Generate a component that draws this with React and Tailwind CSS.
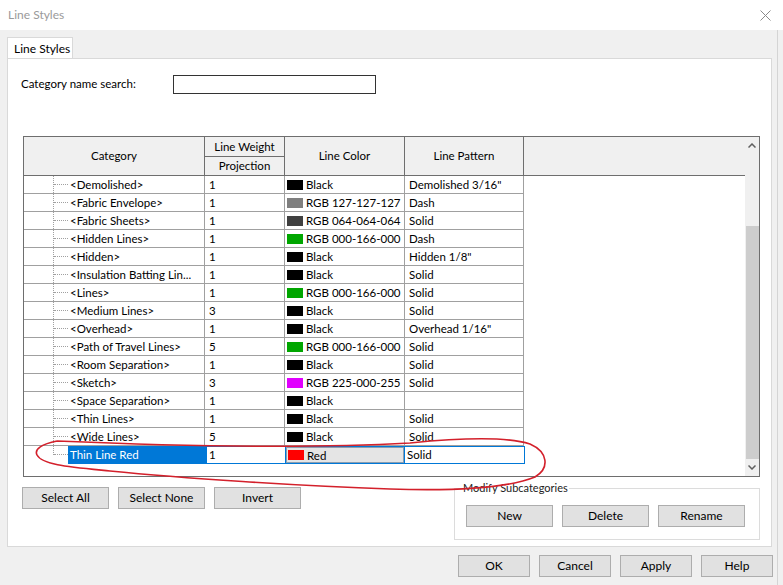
import React from "react";

const rows = [
  { name: "<Demolished>", w: "1", color: "#000000", label: "Black", pattern: 'Demolished 3/16"' },
  { name: "<Fabric Envelope>", w: "1", color: "#7f7f7f", label: "RGB 127-127-127", pattern: "Dash" },
  { name: "<Fabric Sheets>", w: "1", color: "#404040", label: "RGB 064-064-064", pattern: "Solid" },
  { name: "<Hidden Lines>", w: "1", color: "#00a600", label: "RGB 000-166-000", pattern: "Dash" },
  { name: "<Hidden>", w: "1", color: "#000000", label: "Black", pattern: 'Hidden 1/8"' },
  { name: "<Insulation Batting Lin...", w: "1", color: "#000000", label: "Black", pattern: "Solid" },
  { name: "<Lines>", w: "1", color: "#00a600", label: "RGB 000-166-000", pattern: "Solid" },
  { name: "<Medium Lines>", w: "3", color: "#000000", label: "Black", pattern: "Solid" },
  { name: "<Overhead>", w: "1", color: "#000000", label: "Black", pattern: 'Overhead 1/16"' },
  { name: "<Path of Travel Lines>", w: "5", color: "#00a600", label: "RGB 000-166-000", pattern: "Solid" },
  { name: "<Room Separation>", w: "1", color: "#000000", label: "Black", pattern: "Solid" },
  { name: "<Sketch>", w: "3", color: "#e100ff", label: "RGB 225-000-255", pattern: "Solid" },
  { name: "<Space Separation>", w: "1", color: "#000000", label: "Black", pattern: "" },
  { name: "<Thin Lines>", w: "1", color: "#000000", label: "Black", pattern: "Solid" },
  { name: "<Wide Lines>", w: "5", color: "#000000", label: "Black", pattern: "Solid" },
];

function Btn({ children, w = "w-[87px]" }) {
  return (
    <button className={`${w} h-[22px] bg-[#e1e1e1] border border-[#adadad] text-[12px] text-black leading-none`}>
      {children}
    </button>
  );
}

function TreeStub({ last }) {
  return (
    <div className="relative w-[44px] h-full shrink-0">
      <div className={`absolute left-[29px] top-0 ${last ? "h-[9px]" : "h-full"} border-l border-dotted border-[#a0a0a0]`} />
      <div className="absolute left-[30px] top-[8px] w-[14px] border-t border-dotted border-[#a0a0a0]" />
    </div>
  );
}

export default function App() {
  return (
    <div
      className="relative w-[783px] h-[585px] bg-[#f0f0f0] overflow-hidden text-[11.5px] text-black"
      style={{ fontFamily: 'Lato, "Noto Sans", "Liberation Sans", sans-serif' }}
    >
      {/* title bar */}
      <div className="h-[30px] bg-white flex items-center justify-between pl-[8px] pr-[10px]">
        <span className="text-[12px] text-[#9a9a9a]">Line Styles</span>
        <svg width="11" height="11" viewBox="0 0 11 11" className="mr-[2px]">
          <path d="M0.5 0.5 L10.5 10.5 M10.5 0.5 L0.5 10.5" stroke="#8a8a8a" strokeWidth="1" />
        </svg>
      </div>

      <div className="flex h-[555px]">
        <div className="w-[777px] pl-[7px] pr-[5px] pt-[7px] flex flex-col">
          {/* tab */}
          <div className="flex">
            <div className="w-[66px] h-[22px] bg-white border border-b-0 border-[#d9d9d9] flex items-center pl-[6px] whitespace-nowrap text-[12px]">
              Line Styles
            </div>
          </div>
          {/* panel */}
          <div className="h-[489px] bg-white border border-[#d9d9d9] -mt-px flex flex-col pl-[13px] pr-[12px]">
            <div className="flex items-center mt-[15px] h-[20px]">
              <span className="w-[152px] whitespace-nowrap">Category name search:</span>
              <div className="w-[203px] h-[19px] border border-[#333]" />
            </div>

            {/* table */}
            <div className="mt-[42px] ml-[2px] w-[737px] h-[341px] border border-[#6e6e6e] flex">
              <div className="flex-1 flex flex-col">
                {/* header */}
                <div className="flex h-[39px] bg-[#f0f0f0] border-b border-[#6e6e6e]">
                  <div className="w-[181px] border-r border-[#6e6e6e] flex items-center justify-center">Category</div>
                  <div className="w-[80px] border-r border-[#6e6e6e] flex flex-col">
                    <div className="h-[20px] border-b border-[#6e6e6e] flex items-center justify-center">Line Weight</div>
                    <div className="flex-1 flex items-center justify-center">Projection</div>
                  </div>
                  <div className="w-[120px] border-r border-[#6e6e6e] flex items-center justify-center">Line Color</div>
                  <div className="w-[119px] border-r border-[#6e6e6e] flex items-center justify-center">Line Pattern</div>
                  <div className="flex-1" />
                </div>
                {/* rows */}
                {rows.map((r) => (
                  <div key={r.name} className="flex h-[18px]">
                    <div className="w-[181px] flex border-r border-b border-[#a0a0a0]">
                      <TreeStub />
                      <span className="pl-[2px] leading-[18px] whitespace-nowrap overflow-hidden">{r.name}</span>
                    </div>
                    <div className="w-[80px] border-r border-b border-[#a0a0a0] pl-[4px] leading-[18px]">{r.w}</div>
                    <div className="w-[120px] border-r border-b border-[#a0a0a0] flex items-center pl-[2px] gap-[3px]">
                      <span className="w-[16px] h-[10px] shrink-0" style={{ background: r.color }} />
                      <span className="leading-[18px] whitespace-nowrap">{r.label}</span>
                    </div>
                    <div className="w-[119px] border-r border-b border-[#a0a0a0] pl-[4px] leading-[18px] whitespace-nowrap">{r.pattern}</div>
                    <div className="flex-1" />
                  </div>
                ))}
                {/* selected row */}
                <div className="flex h-[18px]">
                  <div className="w-[181px] flex">
                    <TreeStub last />
                    <div className="flex-1 bg-[#0078d7] text-white pl-[2px] leading-[18px]">Thin Line Red</div>
                  </div>
                  <div className="w-[320px] bg-[#0078d7] flex p-px pl-[2px] gap-px">
                    <div className="w-[78px] bg-white pl-[2px] leading-[16px]">1</div>
                    <div className="w-[118px] bg-[#e5e5e5] border border-[#8a9db0] flex items-center pl-px gap-[3px]">
                      <span className="w-[16px] h-[10px] bg-[#ff0000] shrink-0" />
                      <span className="leading-[14px] mt-[2px]">Red</span>
                    </div>
                    <div className="flex-1 bg-white pl-[2px] leading-[16px]">Solid</div>
                  </div>
                  <div className="flex-1" />
                </div>
              </div>
              {/* scrollbar */}
              <div className="w-[14px] bg-[#f0f0f0] flex flex-col items-center">
                <div className="h-[17px] flex items-center justify-center">
                  <svg width="8" height="5" viewBox="0 0 8 5"><path d="M0.5 4.5 L4 1 L7.5 4.5" fill="none" stroke="#606060" strokeWidth="1.5" /></svg>
                </div>
                <div className="mt-[72px] w-[13px] h-[234px] bg-[#cdcdcd]" />
                <div className="flex-1" />
                <div className="h-[17px] flex items-center justify-center">
                  <svg width="8" height="5" viewBox="0 0 8 5"><path d="M0.5 0.5 L4 4 L7.5 0.5" fill="none" stroke="#606060" strokeWidth="1.5" /></svg>
                </div>
              </div>
            </div>

            {/* lower controls */}
            <div className="flex mt-[10px] ml-[1px]">
              <div className="flex gap-[9px] h-[22px]">
                <Btn>Select All</Btn>
                <Btn>Select None</Btn>
                <Btn>Invert</Btn>
              </div>
              <div className="ml-auto mr-[-1px] w-[306px] h-[52px] mt-[1px] relative border border-[#dcdcdc] flex gap-[9px] pl-[11px] pt-[16px]">
                <span className="absolute -top-[9px] left-[7px] bg-white px-px text-[11px] text-[#222] leading-[16px] whitespace-nowrap">Modify Subcategories</span>
                <Btn>New</Btn>
                <Btn>Delete</Btn>
                <Btn>Rename</Btn>
              </div>
            </div>
          </div>

          {/* dialog buttons */}
          <div className="flex justify-end gap-[9px] mt-[8px] mr-[-1px]">
            <Btn w="w-[72px]">OK</Btn>
            <Btn w="w-[72px]">Cancel</Btn>
            <Btn w="w-[72px]">Apply</Btn>
            <Btn w="w-[72px]">Help</Btn>
          </div>
        </div>
        <div className="w-px bg-[#d4d4d4]" />
      </div>

      {/* red annotation */}
      <svg className="absolute left-0 top-0 pointer-events-none" width="783" height="585">
        <path
          d="M57 441 C150 445 300 449 410 443 C460 438 505 436 530 444 C548 452 550 468 535 477 C505 489 450 491 390 489 C300 486 180 478 110 471 C70 467 42 465 37 455 C34 449 42 444 57 441"
          fill="none"
          stroke="#d3202b"
          strokeWidth="1.6"
        />
      </svg>
    </div>
  );
}
